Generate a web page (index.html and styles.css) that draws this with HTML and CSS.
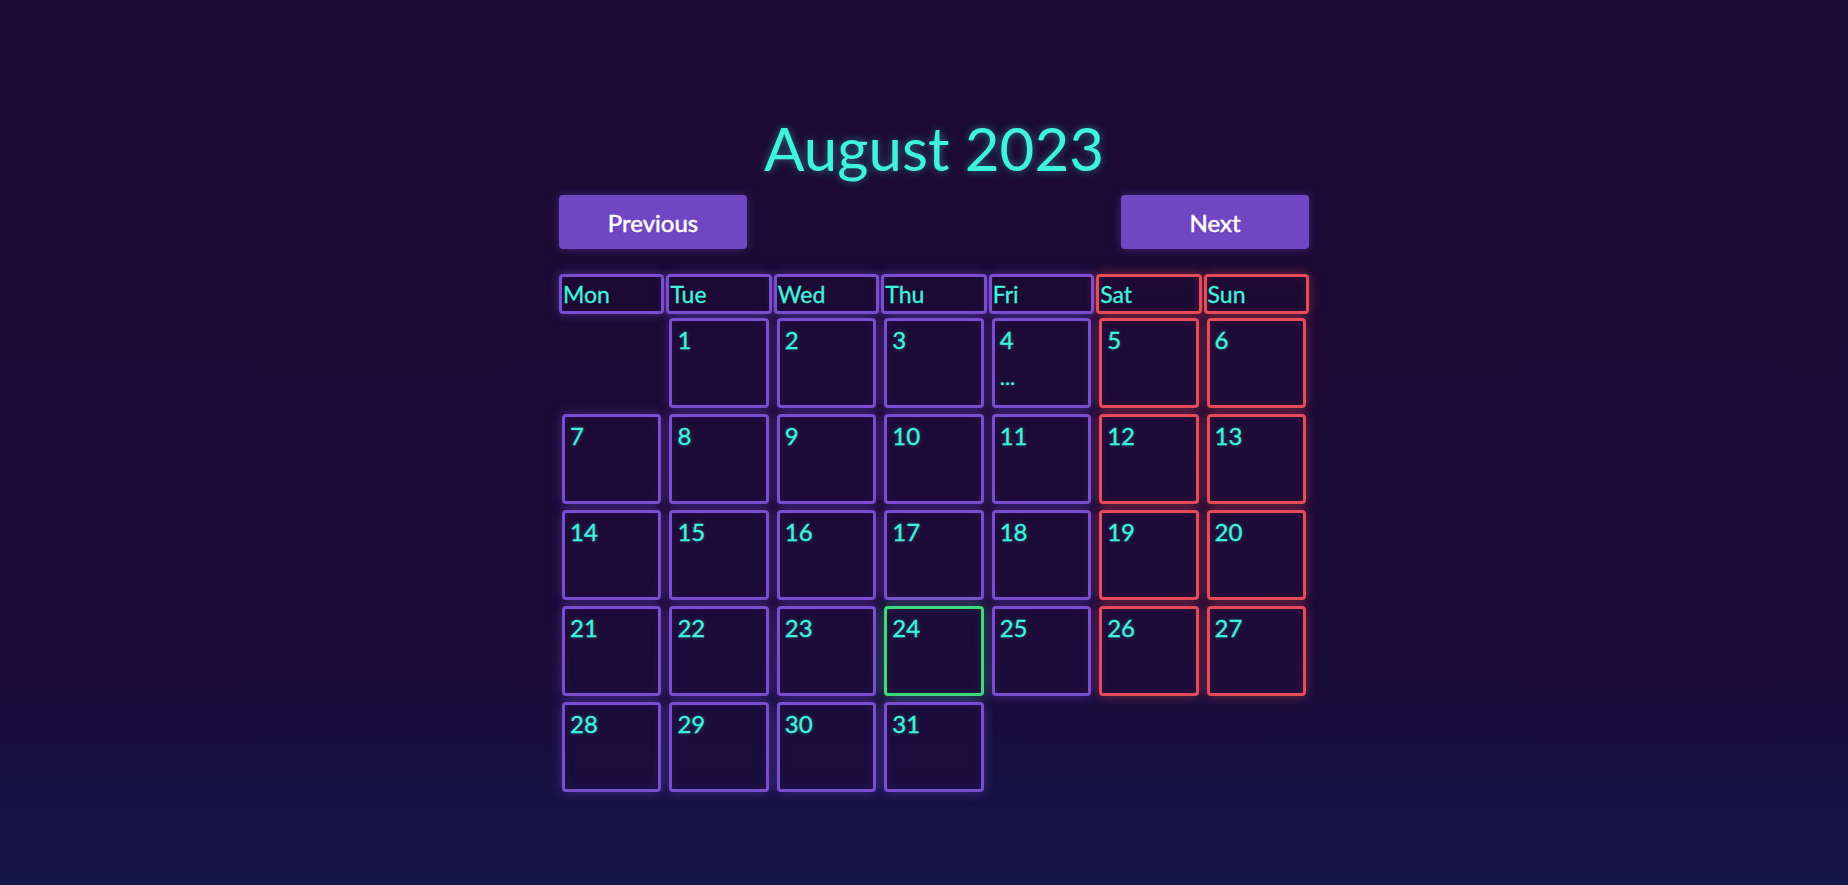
FILE: index.html
```html
<!DOCTYPE html>
<html lang="en">
<head>
    <meta charset="UTF-8">
    <meta name="viewport" content="width=device-width, initial-scale=1.0">
    <title>Calendar</title>
    <link rel="stylesheet" href="styles.css">
</head>
<body>
    <div class="calendar">
        <h1 class="month-title">August 2023</h1>
        <div class="nav">
            <button class="nav-btn">Previous</button>
            <button class="nav-btn">Next</button>
        </div>
        <div class="grid">
            <div class="day-name">Mon</div>
            <div class="day-name">Tue</div>
            <div class="day-name">Wed</div>
            <div class="day-name">Thu</div>
            <div class="day-name">Fri</div>
            <div class="day-name weekend">Sat</div>
            <div class="day-name weekend">Sun</div>

            <div class="day empty"></div>
            <div class="day">1</div>
            <div class="day">2</div>
            <div class="day">3</div>
            <div class="day">4<div class="more">...</div></div>
            <div class="day weekend">5</div>
            <div class="day weekend">6</div>

            <div class="day">7</div>
            <div class="day">8</div>
            <div class="day">9</div>
            <div class="day">10</div>
            <div class="day">11</div>
            <div class="day weekend">12</div>
            <div class="day weekend">13</div>

            <div class="day">14</div>
            <div class="day">15</div>
            <div class="day">16</div>
            <div class="day">17</div>
            <div class="day">18</div>
            <div class="day weekend">19</div>
            <div class="day weekend">20</div>

            <div class="day">21</div>
            <div class="day">22</div>
            <div class="day">23</div>
            <div class="day today">24</div>
            <div class="day">25</div>
            <div class="day weekend">26</div>
            <div class="day weekend">27</div>

            <div class="day">28</div>
            <div class="day">29</div>
            <div class="day">30</div>
            <div class="day">31</div>
        </div>
    </div>
</body>
</html>
```

FILE: styles.css
```css
body {
    margin: 0;
    min-height: 100vh;
    background: linear-gradient(to bottom, #1c0a33 0%, #1b0a36 70%, #14154a 100%);
    font-family: Lato, "Noto Sans", sans-serif;
    color: #3ff3dc;
}
.calendar {
    width: 750px;
    margin-left: calc(50% - 365px);
    padding-top: 112px;
}
.month-title {
    margin: 0;
    font-size: 60px;
    line-height: 72px;
    font-weight: 400;
    text-align: center;
    text-shadow: 0 0 8px rgba(63, 243, 220, 0.45);
}
.nav {
    display: flex;
    justify-content: space-between;
    margin-top: 11px;
}
.nav-btn {
    width: 188px;
    height: 54px;
    border: none;
    border-radius: 4px;
    background-color: #7046c2;
    color: #fff;
    font-family: Lato, sans-serif;
    font-size: 24px;
    -webkit-text-stroke: 0.5px #fff;
    box-shadow: 0 0 10px rgba(112, 70, 194, 0.45);
}
.grid {
    display: grid;
    grid-template-columns: repeat(7, 1fr);
    column-gap: 2px;
    margin-top: 25px;
}
.day-name {
    height: 40px;
    box-sizing: border-box;
    padding: 4px 1px;
    border: 3px solid #7a4ed0;
    border-radius: 4px;
    font-size: 23px;
    line-height: 27px;
    -webkit-text-stroke: 0.3px #3ff3dc;
    box-shadow: 0 0 10px rgba(122, 78, 208, 0.55);
}
.day {
    height: 90px;
    box-sizing: border-box;
    margin: 3px;
    margin-top: 4px;
    margin-bottom: 2px;
    padding: 5px 5px 2px;
    border: 3px solid #7a4ed0;
    border-radius: 4px;
    background-color: rgba(32, 12, 58, 0.5);
    font-size: 24px;
    line-height: 28px;
    -webkit-text-stroke: 0.3px #3ff3dc;
    text-shadow: 0 0 4px rgba(63, 243, 220, 0.35);
    box-shadow: 0 0 12px rgba(122, 78, 208, 0.45), inset 0 0 10px rgba(122, 78, 208, 0.1);
}
.weekend {
    border-color: #e74b57;
    box-shadow: 0 0 12px rgba(231, 75, 87, 0.45), inset 0 0 10px rgba(231, 75, 87, 0.1);
}
.today {
    border-color: #3ddc7a;
    box-shadow: 0 0 14px rgba(61, 220, 122, 0.4), inset 0 0 12px rgba(61, 220, 122, 0.1);
}
.empty {
    border-color: transparent;
    background: transparent;
    box-shadow: none;
}
.more {
    margin-top: 12px;
    font-size: 22px;
    line-height: 22px;
}
```
